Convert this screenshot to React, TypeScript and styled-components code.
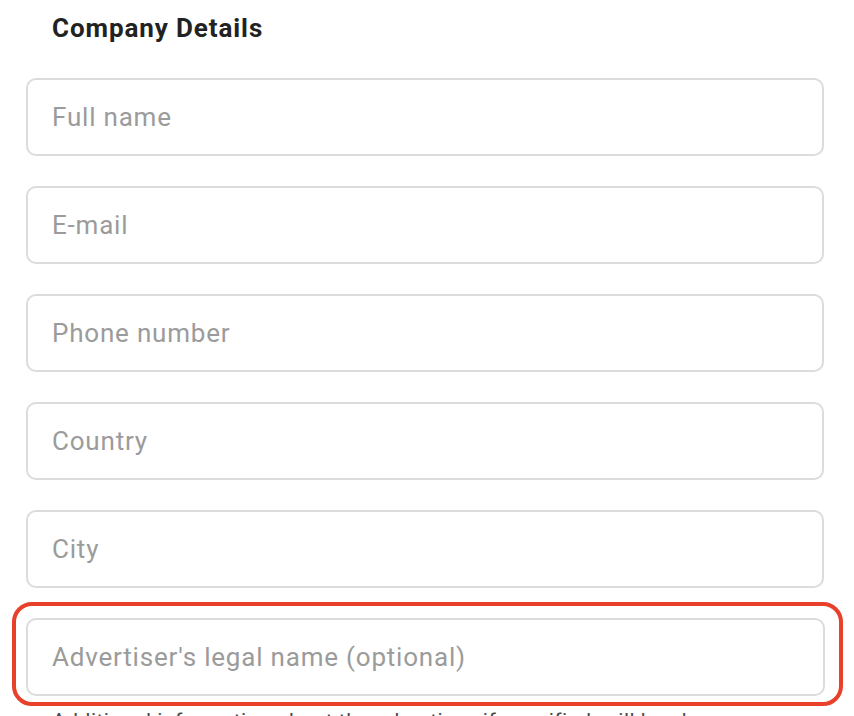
import React from 'react';
import styled, { createGlobalStyle } from 'styled-components';

const fields = ['Full name', 'E-mail', 'Phone number', 'Country', 'City'];

const GlobalStyle = createGlobalStyle`
  html, body {
    margin: 0;
    padding: 0;
    background: #ffffff;
    overflow: hidden;
  }
  body {
    font-family: Roboto, 'Liberation Sans', sans-serif;
  }
`;

const App = () => {
  return (
    <Page>
      <GlobalStyle />
      <Title>Company Details</Title>
      <FieldList>
        {fields.map((item) => (
          <Input key={item} type="text" placeholder={item} />
        ))}
        <Highlight>
          <Input type="text" placeholder="Advertiser's legal name (optional)" />
        </Highlight>
      </FieldList>
      <Hint>Additional information about the advertiser, if specified, will be shown</Hint>
    </Page>
  );
};

export default App;

const Page = styled.div`
  width: 854px;
  height: 716px;
  box-sizing: border-box;
  padding: 13px 30px 0 26px;
  overflow: hidden;
`;

const Title = styled.h2`
  margin: 0 0 35px 26px;
  font-size: 26px;
  line-height: 30px;
  font-weight: 700;
  letter-spacing: 0.9px;
  color: #222222;
`;

const FieldList = styled.div`
  display: flex;
  flex-direction: column;
  gap: 30px;
`;

const Input = styled.input`
  display: block;
  width: 100%;
  height: 78px;
  box-sizing: border-box;
  border: 2px solid #dcdcdc;
  border-radius: 10px;
  padding: 0 24px;
  font-family: Roboto, 'Liberation Sans', sans-serif;
  font-size: 26px;
  letter-spacing: 0.8px;
  color: #333333;
  background: #ffffff;
  outline: none;

  &::placeholder {
    color: #9b9b9b;
  }
`;

const Highlight = styled.div`
  margin: -16px -19px 0 -14px;
  padding: 12px 14px 6px 10px;
  border: 4px solid #e8402a;
  border-radius: 20px;
`;

const Hint = styled.p`
  margin: 2px 0 0 26px;
  font-size: 21px;
  line-height: 26px;
  letter-spacing: 0.5px;
  color: #4a4a4a;
  white-space: nowrap;
`;
